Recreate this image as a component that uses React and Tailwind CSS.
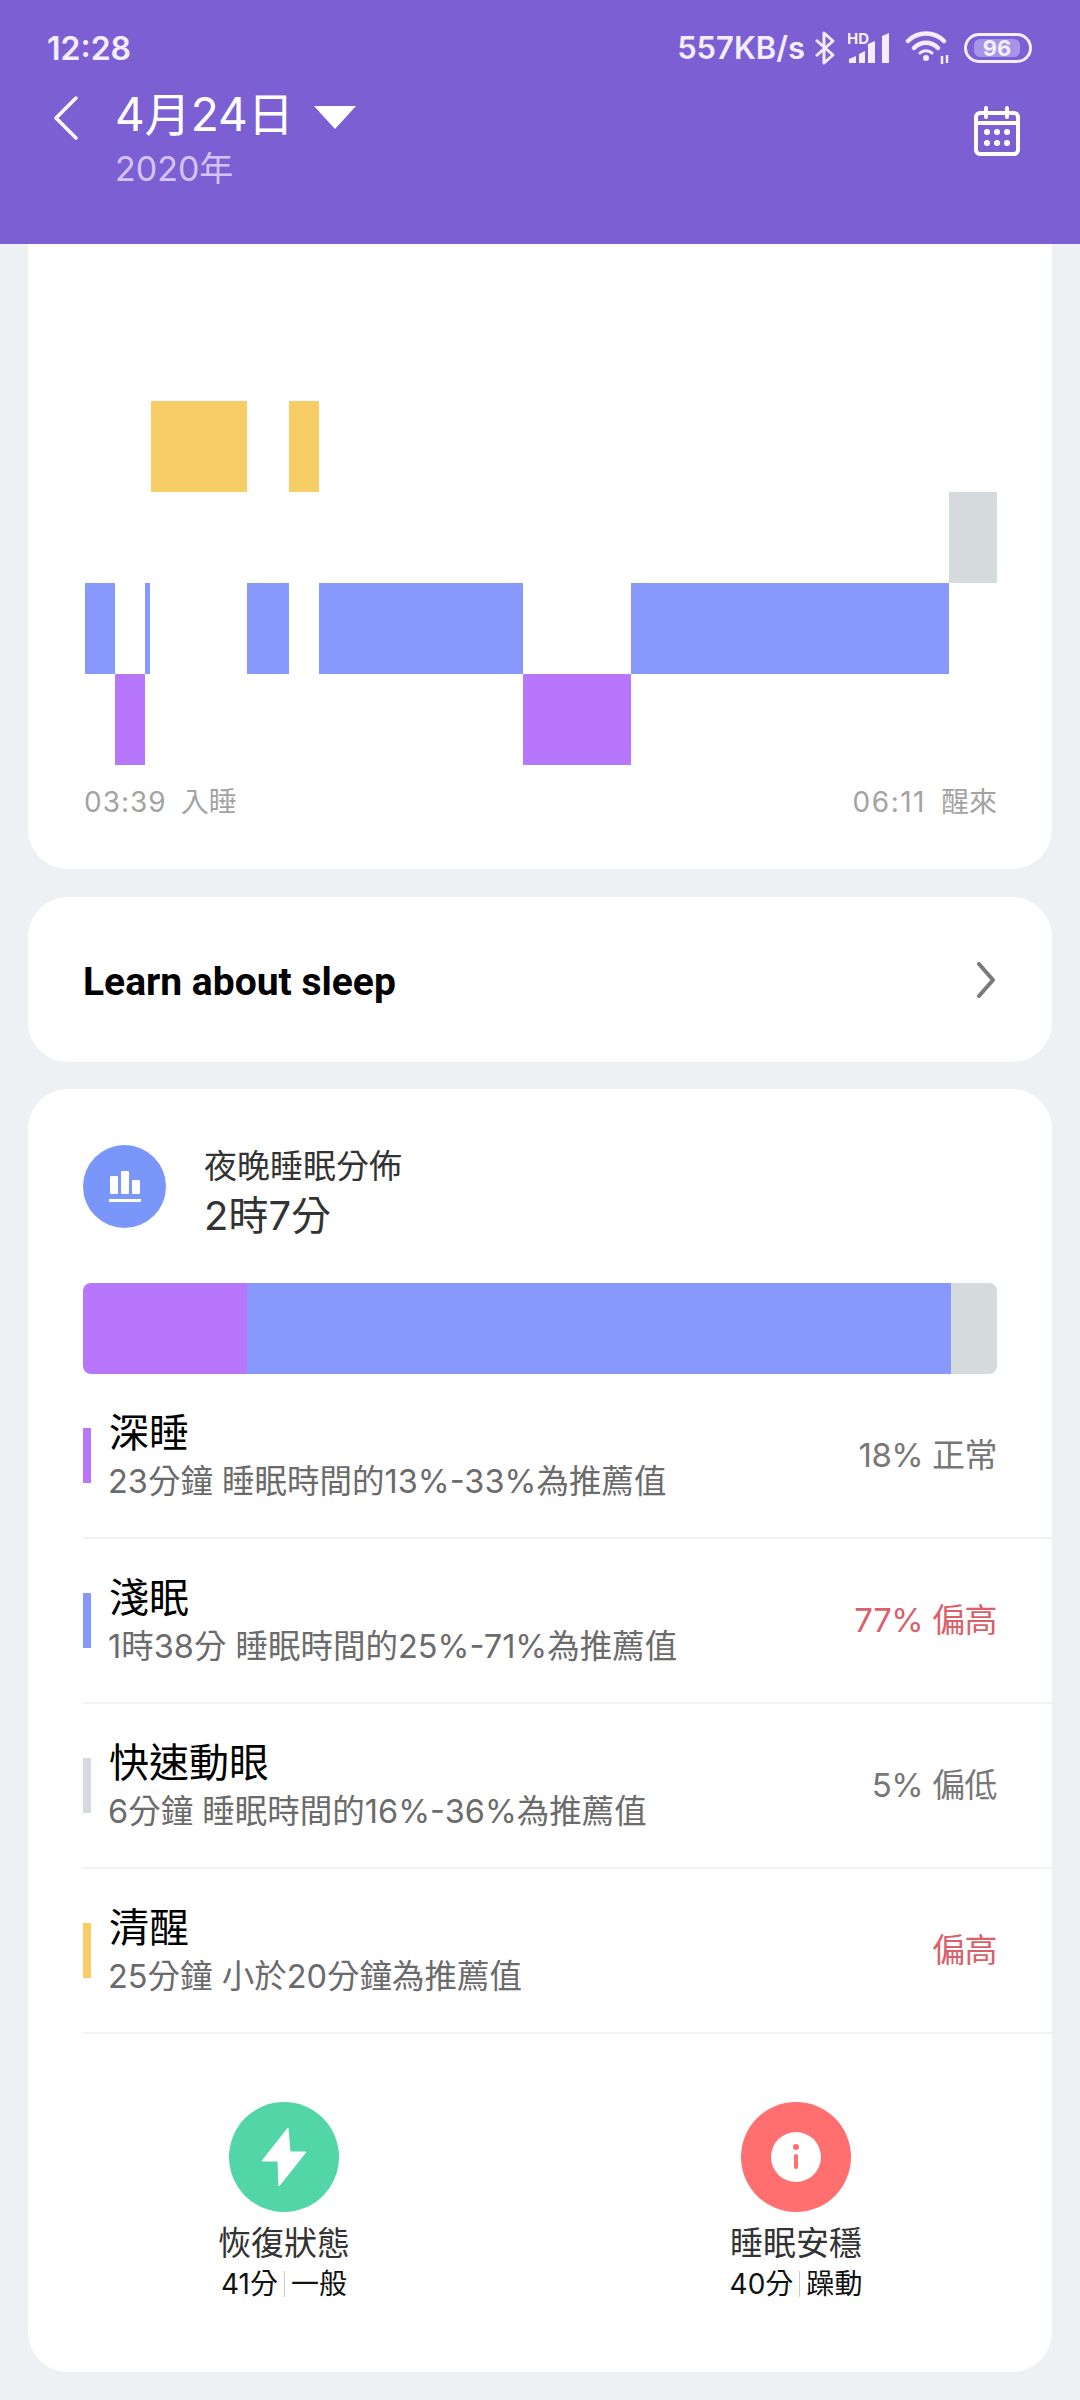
const FONT = { fontFamily: 'Inter, "Noto Sans CJK TC", sans-serif' };

function StatusBar() {
  return (
    <div className="flex h-[66px] items-end justify-between pl-[47px] pr-[48px] text-[#f3edff]">
      <span className="text-[32px] font-semibold leading-[34px]">12:28</span>
      <div className="flex items-center">
        <span className="text-[31px] font-semibold leading-[34px]">557KB/s</span>
        <svg width="22" height="36" viewBox="0 0 22 36" className="ml-[9px]" fill="none" stroke="#f3edff" strokeWidth="3">
          <path d="M2 10 L19 25 L10 33 V3 L19 11 L2 26" strokeLinejoin="round" />
        </svg>
        <svg width="42" height="36" viewBox="0 -2 42 36" className="ml-[12px]" fill="#f3edff">
          <path d="M1 31V27L8 24V31Z" />
          <path d="M11 31V22L17 19V31Z" />
          <path d="M20 31V12L27 9V31Z" />
          <path d="M34 31V4L41 1V31Z" />
          <text x="-1" y="12" fontSize="15" fontWeight="700" fontFamily="Inter, sans-serif">HD</text>
        </svg>
        <svg width="46" height="36" viewBox="0 0 46 36" className="ml-[15px]" fill="none" stroke="#f3edff" strokeWidth="4.5" strokeLinecap="round">
          <path d="M3 11C13 1 29 1 39 11" />
          <path d="M9 18C16 11 26 11 33 18" />
          <circle cx="21" cy="28" r="3" fill="#f3edff" strokeWidth="0" />
          <path d="M15 23C18 20 24 20 27 23" strokeWidth="3" />
          <path d="M37 26v8" strokeWidth="2.5" strokeLinecap="butt" />
          <path d="M42 25v8" strokeWidth="2.5" strokeLinecap="butt" />
        </svg>
        <div className="ml-[13px] flex h-[30px] w-[68px] items-center justify-center rounded-full border-[3px] border-[#f3edff] py-[3px] pl-[7px] pr-[9px]">
          <div className="flex h-full w-full items-center justify-center rounded-[6px] bg-[#a794e6] text-[22px] font-bold leading-none text-[#f3edff]">96</div>
        </div>
      </div>
    </div>
  );
}

function Header() {
  return (
    <div className="h-[244px] bg-[#7c5fd3]">
      <StatusBar />
      <div className="flex justify-between pl-[53px] pr-[59px] pt-[22px]">
        <div className="flex">
          <svg width="26" height="46" viewBox="0 0 26 46" fill="none" stroke="#ffffff" strokeWidth="3.5" strokeLinecap="round" strokeLinejoin="round" className="mt-[7px]">
            <path d="M23 3 L3 23 L23 43" />
          </svg>
          <div className="ml-[36px]">
            <div className="flex h-[52px] items-center">
              <span className="text-[46px] leading-[52px] text-white">4月24日</span>
              <svg width="42" height="23" viewBox="0 0 42 23" className="ml-[20px] mt-[6px]" fill="#ffffff">
                <path d="M0 0H42L21 23Z" />
              </svg>
            </div>
            <div className="mt-[9px] text-[34px] leading-[40px] text-[#d4c4f5]">2020年</div>
          </div>
        </div>
        <svg width="48" height="50" viewBox="0 0 48 50" fill="none" stroke="#ffffff" className="mt-[18px]">
          <rect x="3" y="7" width="42" height="41" rx="4" strokeWidth="4" />
          <path d="M3 17H45" strokeWidth="4" />
          <path d="M13 2V11M34 2V11" strokeWidth="4" strokeLinecap="round" />
          <g fill="#ffffff" stroke="none">
            <circle cx="14" cy="26" r="3" /><circle cx="24" cy="26" r="3" /><circle cx="34" cy="26" r="3" />
            <circle cx="14" cy="37" r="3" /><circle cx="24" cy="37" r="3" /><circle cx="34" cy="37" r="3" />
          </g>
        </svg>
      </div>
    </div>
  );
}

function Hypnogram() {
  const blocks = [
    [66, 0, 96, 91, '#f7cd68'], [204, 0, 30, 91, '#f7cd68'],
    [864, 91, 48, 91, '#d5dbdc'],
    [0, 182, 30, 91, '#8799fd'], [60, 182, 5, 91, '#8799fd'], [162, 182, 42, 91, '#8799fd'],
    [234, 182, 204, 91, '#8799fd'], [546, 182, 318, 91, '#8799fd'],
    [30, 273, 30, 91, '#b876fc'], [438, 273, 108, 91, '#b876fc'],
  ];
  return (
    <svg width="912" height="364" viewBox="0 0 912 364" className="block">
      {blocks.map(([x, y, w, h, c], i) => <rect key={i} x={x} y={y} width={w} height={h} fill={c} />)}
    </svg>
  );
}

function Row({ color, title, sub, right, red }) {
  return (
    <div className="flex h-[165px] items-center border-b-2 border-[#f0f1f2] pr-[55px]">
      <div className="h-[55px] w-[8px]" style={{ backgroundColor: color }} />
      <div className="ml-[18px] flex-1">
        <div className="text-[40px] leading-[46px] text-black">{title}</div>
        <div className="ml-[-1px] mt-[6px] text-[32.5px] leading-[40px] text-[#6b6b6b]">{sub}</div>
      </div>
      <div className={red ? 'text-[33px] tracking-[-0.5px] text-[#d9606a]' : 'text-[33px] tracking-[-0.5px] text-[#777777]'}>{right}</div>
    </div>
  );
}

function Stat({ bg, icon, title, a, b }) {
  return (
    <div className="flex flex-col items-center">
      <div className="flex h-[110px] w-[110px] items-center justify-center rounded-full" style={{ backgroundColor: bg }}>{icon}</div>
      <div className="mt-[10px] text-[33px] leading-[42px] text-[#333333]">{title}</div>
      <div className="flex items-center text-[28px] leading-[40px] text-[#111111]">
        <span>{a}</span>
        <span className="mx-[6px] h-[26px] w-px bg-[#cccccc]" />
        <span>{b}</span>
      </div>
    </div>
  );
}

export default function App() {
  return (
    <div className="flex h-[2400px] w-[1080px] flex-col overflow-hidden bg-[#eef1f4]" style={FONT}>
      <Header />
      <div className="flex flex-col px-[28px]">
        <div className="h-[625px] rounded-b-[40px] bg-white pl-[57px] pr-[55px] pt-[157px]">
          <Hypnogram />
          <div className="ml-[-1px] mt-[19px] flex justify-between text-[28px] leading-[36px] text-[#a3a3a3]">
            <span className="flex gap-[14px]"><span className="tracking-[1px]">03:39</span><span>入睡</span></span>
            <span className="flex gap-[15px]"><span className="tracking-[1.5px]">06:11</span><span>醒來</span></span>
          </div>
        </div>

        <div className="mt-[28px] flex h-[165px] items-center justify-between rounded-[40px] bg-white pl-[55px] pr-[56px]">
          <span className="pt-[5px] text-[39px] font-bold text-black" style={{ fontFamily: 'Roboto, sans-serif' }}>Learn about sleep</span>
          <svg width="21" height="36" viewBox="0 0 21 36" fill="none" stroke="#7a7a7a" strokeWidth="4" strokeLinecap="round" strokeLinejoin="round" className="mt-[1px]">
            <path d="M4 2 L18 18 L4 34" />
          </svg>
        </div>

        <div className="mt-[27px] h-[1283px] rounded-[40px] bg-white pt-[56px]">
          <div className="flex items-start pl-[55px]">
            <div className="flex h-[83px] w-[83px] items-center justify-center rounded-full bg-[#7b96fa]">
              <svg width="32" height="32" viewBox="0 0 32 32" fill="#ffffff">
                <rect x="1" y="5" width="8" height="18" rx="1" />
                <rect x="12" y="0" width="8" height="23" rx="1" />
                <rect x="23" y="9" width="8" height="14" rx="1" />
                <rect x="0" y="28" width="32" height="3" />
              </svg>
            </div>
            <div className="ml-[38px]">
              <div className="text-[33px] leading-[42px] text-[#333333]">夜晚睡眠分佈</div>
              <div className="mt-[5px] text-[40px] leading-[48px] text-[#333333]">2時7分</div>
            </div>
          </div>
          <div className="ml-[55px] mr-[55px] mt-[43px] flex h-[91px] overflow-hidden rounded-[8px]">
            <div className="w-[164px] bg-[#b876fc]" />
            <div className="w-[704px] bg-[#8799fd]" />
            <div className="flex-1 bg-[#d5dbdc]" />
          </div>
          <div className="ml-[55px]">
            <Row color="#b876fc" title="深睡" sub="23分鐘 睡眠時間的13%-33%為推薦值" right="18% 正常" />
            <Row color="#8799fd" title="淺眠" sub="1時38分 睡眠時間的25%-71%為推薦值" right="77% 偏高" red />
            <Row color="#d5dbdc" title="快速動眼" sub="6分鐘 睡眠時間的16%-36%為推薦值" right="5% 偏低" />
            <Row color="#f7cd68" title="清醒" sub="25分鐘 小於20分鐘為推薦值" right="偏高" red />
          </div>
          <div className="mt-[68px] grid grid-cols-2">
            <Stat
              bg="#52d6a7"
              title="恢復狀態"
              a="41分"
              b="一般"
              icon={
                <svg width="46" height="60" viewBox="0 0 46 60" fill="#ffffff" stroke="#ffffff" strokeWidth="1" strokeLinejoin="round">
                  <path d="M27 1 L1 34 H17 L18 59 L45 25 H29 Z" />
                </svg>
              }
            />
            <Stat
              bg="#ff6f70"
              title="睡眠安穩"
              a="40分"
              b="躁動"
              icon={
                <svg width="50" height="50" viewBox="0 0 50 50">
                  <circle cx="25" cy="25" r="25" fill="#ffffff" />
                  <circle cx="25" cy="15" r="3" fill="#ff6f70" />
                  <rect x="23" y="22" width="4" height="15" rx="2" fill="#ff6f70" />
                </svg>
              }
            />
          </div>
        </div>
      </div>
    </div>
  );
}
